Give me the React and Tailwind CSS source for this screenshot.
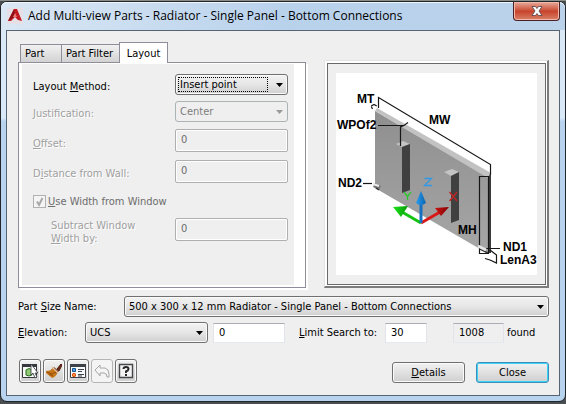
import React from "react";

function Arrow({ className }) {
  return (
    <svg viewBox="0 0 7 4" className={"pointer-events-none absolute right-[5px] top-[9px] h-1 w-[7px] " + className} aria-hidden="true">
      <path d="M0 0h7L3.500 4z" fill="currentColor" />
    </svg>
  );
}

function Select({ id, value, disabled, focused, className }) {
  return (
    <div className={"relative " + className}>
      <select
        id={id}
        disabled={disabled}
        className={
          "block h-[21px] w-full appearance-none rounded-[3px] border pl-[4px] pr-5 leading-[19px] opacity-100 outline-none " +
          (disabled
            ? "border-[#adb2b5] bg-[#efefef] text-[#7d7d7d]"
            : "border-[#707070] bg-linear-to-b from-[#f2f2f2] via-[#e6e6e6] to-[#cfcfcf] text-black shadow-[inset_0_0_0_1px_#fafafa]")
        }
      >
        <option>{value}</option>
      </select>
      {focused && <span className="pointer-events-none absolute inset-y-[3px] left-[3px] right-[20px] border border-dotted border-black" />}
      <Arrow className={disabled ? "text-[#9a9a9a]" : "text-black"} />
    </div>
  );
}

function OffInput({ id }) {
  return (
    <input
      id={id}
      disabled
      defaultValue="0"
      className="block h-[23px] w-[113px] rounded-[2px] border border-[#afafaf] bg-[#efefef] pb-[3px] pl-[5px] text-[#6d6d6d] shadow-[inset_0_0_0_1px_#fff]"
    />
  );
}

function Label({ htmlFor, off, children, className = "" }) {
  return (
    <label htmlFor={htmlFor} className={(off ? "text-[#a0a0a0] [text-shadow:1px_1px_0_#fff] " : "") + className}>
      {children}
    </label>
  );
}

function Tool({ label, disabled, children }) {
  return (
    <button
      type="button"
      aria-label={label}
      disabled={disabled}
      className={
        "flex h-6 w-[22px] items-center justify-center rounded-[3px] border " +
        (disabled
          ? "border-[#b5b5b5] bg-[#f4f4f4]"
          : "border-[#707070] bg-linear-to-b from-[#f2f2f2] to-[#cfcfcf] shadow-[inset_0_0_0_1px_#fafafa]")
      }
    >
      <svg viewBox="0 0 16 16" className="size-4 shrink-0">{children}</svg>
    </button>
  );
}

function Preview() {
  return (
    <svg viewBox="336 73 201 202" className="block h-[202px] w-full bg-white font-['Liberation_Sans',Arial,sans-serif]" role="img" aria-label="Radiator preview">
      <defs>
        <linearGradient id="face" x1="0" y1="0" x2="0" y2="1">
          <stop offset="0" stopColor="#8f8f8f" />
          <stop offset="1" stopColor="#a6a6a6" />
        </linearGradient>
        <linearGradient id="blueCone"><stop offset="0" stopColor="#2a9cf0" /><stop offset="1" stopColor="#0863ae" /></linearGradient>
        <linearGradient id="greenCone"><stop offset="0" stopColor="#1be51b" /><stop offset="1" stopColor="#079807" /></linearGradient>
        <linearGradient id="redCone"><stop offset="0" stopColor="#c91414" /><stop offset="1" stopColor="#850000" /></linearGradient>
      </defs>
      <path d="M375 111L488 177V252L480 249L375 188z" fill="url(#face)" />
      <path d="M375 111L377 108L491 173L488 178z" fill="#c2c2c2" />
      <path d="M488 177L491 173V253L488 253z" fill="#3b3b3b" />
      <path d="M396 144L403 141L410 144L402 147z" fill="#c4c4c4" />
      <path d="M402 147L410 144V190L402 193z" fill="#404040" />
      <path d="M444 172L452 169L459 172L451 176z" fill="#c4c4c4" />
      <path d="M451 176L459 172V220L451 223z" fill="#404040" />
      <g fill="none" stroke="#161616" strokeWidth="1.200">
        <path d="M378.500 108V97.500L490.500 164.500V175" />
        <path d="M378 125.500H404L408 122.500M405 125L400.500 127V146" />
        <path d="M374 104.500L371 106L372.500 109M374 104.500L377 106" strokeDasharray="3 1" />
        <path d="M363 183.500H372" />
        <path d="M479.500 176.500H488.500V253.500H479.500z" />
        <path d="M486 248.500H500M490 250L496.500 255V263L490 260M485 258.500L490 260" />
      </g>
      <path d="M374 185L380 188" stroke="#777" strokeWidth="4.500" />
      <path d="M373 184L379 186" stroke="#ededed" strokeWidth="2" />
      <path d="M376 188L379 190M480 249L488 253" stroke="#333" strokeWidth="1.500" />
      <path d="M478 246L486 250" stroke="#e5e5e5" strokeWidth="3" />
      <path d="M421 223L402 212" stroke="#13c413" strokeWidth="3" />
      <path d="M393 207L408 206L401 217z" fill="url(#greenCone)" />
      <path d="M421 223L440 212" stroke="#db1818" strokeWidth="3" />
      <path d="M449 207L435 208L441 216z" fill="url(#redCone)" />
      <path d="M421 223V203" stroke="#1471c2" strokeWidth="3" />
      <path d="M421 191L416 203Q421 207 426 203z" fill="url(#blueCone)" />
      <g fill="none" strokeWidth="1.300">
        <path d="M424.500 178.500H431.500L424.500 185.500H432" stroke="#3098e6" />
        <path d="M404 192L407.500 196.500L411 192M407.500 196V200" stroke="#28c928" />
        <path d="M449.500 192L457 201M457 192L449.500 201" stroke="#c32323" />
      </g>
      <g className="text-[12px] font-bold" fill="#000">
        <text x="357" y="103">MT</text>
        <text x="337" y="129">WPOf2</text>
        <text x="429" y="124">MW</text>
        <text x="338" y="187">ND2</text>
        <text x="458" y="234">MH</text>
        <text x="503" y="251">ND1</text>
        <text x="500" y="264">LenA3</text>
      </g>
    </svg>
  );
}

const tab = "border border-b-0 border-[#8d8e99] ";
const push = "h-[21px] w-[73px] rounded-[3px] border bg-linear-to-b from-[#f2f2f2] to-[#cfcfcf] ";
const edit = "block h-5 border border-t-[#abadb3] border-x-[#e2e3ea] border-b-[#e3e9ef] pl-[5px] ";

export default function App() {
  return (
    <div className="bg-[#4b4e50] pb-[3px] font-['DejaVu_Sans_Condensed','Noto_Sans',sans-serif] text-[11px] leading-[13px] text-black">
      <div className="h-px bg-[#8b8e88]" />
      <main className="rounded-[7px] border border-[#22262b] bg-linear-to-b from-[#dbe9f7] from-0% via-[#d9e9f7] via-[29%] to-[#b7d3ee] to-[30%] px-[5px] pb-[5px]">
        <header className="-mx-[5px] flex h-7 items-start rounded-t-[6px] bg-linear-to-r from-[#dae7f4] via-[#b9d2ec] to-[#bad2ea] pl-[6px] pr-[5px] shadow-[inset_0_1px_0_#eff6fc]">
          <svg viewBox="0 0 16 16" className="mt-[6px] size-4" aria-hidden="true">
            <path d="M0 0h16v16H0z" fill="#e6dfe5" />
            <path d="M7 1h3l5 12-4-1-3-3-4 4-3 0z" fill="#c01920" />
            <path d="M7 1L1 13l6-4 1-3z" fill="#8c1016" />
            <path d="M8 5l2 4H6z" fill="#ef7b78" />
          </svg>
          <h1 className="ml-[5px] mt-1 flex-1 whitespace-nowrap font-['Open_Sans','Noto_Sans',sans-serif] text-[12px] leading-5">
            Add Multi-view Parts - Radiator - Single Panel - Bottom Connections
          </h1>
          <button type="button" aria-label="Close window" className="flex h-[19px] w-[47px] items-center justify-center rounded-b-[4px] border border-t-0 border-[#4d2023] bg-linear-to-b from-[#e5a99b] via-[#c8432c] via-[52%] to-[#d98068] shadow-[inset_0_0_0_1px_#f0b9ab]">
            <svg viewBox="0 0 12 10" className="h-[10px] w-3"><path d="M1 .5h3.500L6 2.500 7.500 .5H11L8 5l3 4.500H7.500L6 7.500 4.500 9.500H1L4 5z" fill="#fff" stroke="#5d4b50" strokeWidth=".9" /></svg>
          </button>
        </header>

        <div className="border border-[#566373] bg-[#efefef] pb-3 pl-[11px] pr-[10px] pt-[11px]">
          <div className="flex items-start">
            <section className="min-w-0 flex-1">
              <div className="flex h-5 items-end pl-[2px]" role="tablist">
                <button type="button" role="tab" aria-selected="false" className={tab + "h-[18px] w-[42px] bg-linear-to-b from-[#f2f2f2] to-[#d2d2d2] pl-1 text-left"}>Part</button>
                <button type="button" role="tab" aria-selected="false" className={tab + "h-[18px] w-[57px] whitespace-nowrap border-l-0 border-r-0 bg-linear-to-b from-[#f2f2f2] to-[#d2d2d2] pl-1 text-left"}>Part Filter</button>
                <button type="button" role="tab" aria-selected="true" className={tab + "relative z-10 -mb-px h-[21px] w-[49px] bg-white"}>Layout</button>
              </div>
              <div role="tabpanel" className="border border-[#8d8e99] bg-white pb-[2px] pl-[3px] pr-[11px] pt-px shadow-[2px_2px_0_#fff]">
                <div className="flex flex-col bg-[#efefef] pb-10 pl-[11px] pr-[6px] pt-[10px]">
                  <div className="flex items-center justify-between">
                    <Label htmlFor="method" className="pt-[3px]">Layout <u>M</u>ethod:</Label>
                    <Select id="method" value="Insert point" focused className="w-[113px]" />
                  </div>
                  <div className="mt-[6px] flex items-center justify-between">
                    <Label off htmlFor="just" className="pt-[3px]"><u>J</u>ustification:</Label>
                    <Select id="just" value="Center" disabled className="w-[113px]" />
                  </div>
                  <div className="mt-[7px] flex items-center justify-between">
                    <Label off htmlFor="offset" className="pt-[6px]"><u>O</u>ffset:</Label>
                    <OffInput id="offset" />
                  </div>
                  <div className="mt-2 flex items-center justify-between">
                    <Label off htmlFor="dist" className="pt-[3px]">D<u>i</u>stance from Wall:</Label>
                    <OffInput id="dist" />
                  </div>
                  <div className="mt-3 flex h-[13px] items-center gap-[2px]">
                    <span className="relative size-[13px]">
                      <input id="usewidth" type="checkbox" defaultChecked disabled className="block size-[13px] appearance-none border border-[#b1b1b1] bg-[#f4f4f4]" />
                      <svg viewBox="0 0 13 13" className="pointer-events-none absolute inset-0 size-[13px]" aria-hidden="true"><path d="M4 6.500L6 10L9.500 3" fill="none" stroke="#a9a9a9" strokeWidth="2" /></svg>
                    </span>
                    <label htmlFor="usewidth" className="text-[#6d6d6d]"><u>U</u>se Width from Window</label>
                  </div>
                  <div className="mt-[10px] flex items-start justify-between pl-[18px]">
                    <Label off htmlFor="sub" className="pt-px">Subtract Window<br /><u>W</u>idth by:</Label>
                    <OffInput id="sub" />
                  </div>
                </div>
              </div>
            </section>

            <aside className="ml-[18px] mt-[18px] w-[225px] border border-b-2 border-r-2 border-[#e3e3e3] border-b-[#7c7c7c] border-r-[#7c7c7c] bg-white p-[2px] pb-px pr-px">
              <div className="border border-[#696969] bg-[#efefef] px-2 py-[9px]">
                <Preview />
              </div>
            </aside>
          </div>

          <div className="mt-2 flex items-center">
            <label htmlFor="size" className="w-[106px]">Part <u>S</u>ize Name:</label>
            <Select id="size" value="500 x 300 x 12 mm Radiator - Single Panel - Bottom Connections" className="min-w-0 flex-1" />
          </div>
          <div className="mt-[5px] flex items-center">
            <label htmlFor="elev" className="w-[67px]"><u>E</u>levation:</label>
            <Select id="elev" value="UCS" className="w-[123px]" />
            <input aria-label="Elevation value" defaultValue="0" className={edit + "ml-[5px] w-[72px] bg-white"} />
            <label htmlFor="limit" className="ml-[14px] w-[86px] whitespace-nowrap"><u>L</u>imit Search to:</label>
            <input id="limit" defaultValue="30" className={edit + "w-[42px] bg-white"} />
            <input aria-label="Number found" readOnly defaultValue="1008" className={edit + "ml-[26px] w-[51px] bg-[#efefef]"} />
            <span className="ml-[3px]">found</span>
          </div>

          <div className="mt-4 flex items-end">
            <div className="flex gap-[2px] pl-px">
              <Tool label="Select part">
                <path d="M.5 1.500h14v13H.5z" fill="#f5f8f3" stroke="#35383d" />
                <path d="M0 1h15v3H0z" fill="#35383d" />
                <path d="M4 7q3-3 6 0v5q-3 2-6 0z" fill="#8fcb70" stroke="#2f6b25" />
                <path d="M9 1v11l2-2 2 5 2-1-2-4h3z" fill="#fff" stroke="#30343a" strokeWidth=".8" />
              </Tool>
              <Tool label="Match properties">
                <path d="M11 6l4-5 1 1-3 6z" fill="#6b2b16" stroke="#4e1c10" />
                <path d="M8 4l5 4-3 4-5-5z" fill="#84503a" />
                <path d="M0 8q5 0 7-3l4 5q-1 4-5 5l-6-5z" fill="#c77718" />
                <path d="M1 9l5 2 4-2M3 11l4 2" stroke="#8f4c0b" fill="none" />
                <path d="M6 4l6 6" stroke="#e4c5a0" strokeWidth="1.200" />
              </Tool>
              <Tool label="Properties list">
                <path d="M.5 1.500h15v13H.5z" fill="#f6f7f8" stroke="#3d4148" />
                <path d="M0 1h16v3H0z" fill="#3d4148" />
                <path d="M2.500 5.500h3v3h-3z" fill="#52a4e3" stroke="#165492" />
                <circle cx="4" cy="12" r="1.700" fill="#ff953a" stroke="#d94a0b" />
                <path d="M8 6.500h6M8 8.500h4M8 11.500h6M8 13h4" stroke="#3d4148" />
              </Tool>
              <Tool label="Undo" disabled>
                <path d="M1 7l5-5v3h5q4 1 4 6v3h-2q0-4-3-4H6v3z" fill="#f5f5f5" stroke="#a6a6a6" strokeLinejoin="round" />
              </Tool>
              <Tool label="Help">
                <path d="M1.500 1.500h13v13h-13z" fill="#f3f3f3" stroke="#45474a" strokeWidth="1.400" />
                <path d="M5.500 6Q5.500 4 8 4t2.500 2Q10.500 7.500 8 8.500V10M8 11v2" fill="none" stroke="#252729" strokeWidth="2" />
              </Tool>
            </div>
            <button type="button" className={push + "ml-auto border-[#707070] shadow-[inset_0_0_0_1px_#fafafa]"}><u>D</u>etails</button>
            <button type="button" className={push + "ml-[11px] border-[#3c8fb8] shadow-[inset_0_0_0_1px_#3bd2f5]"}>Close</button>
          </div>
        </div>
      </main>
    </div>
  );
}
